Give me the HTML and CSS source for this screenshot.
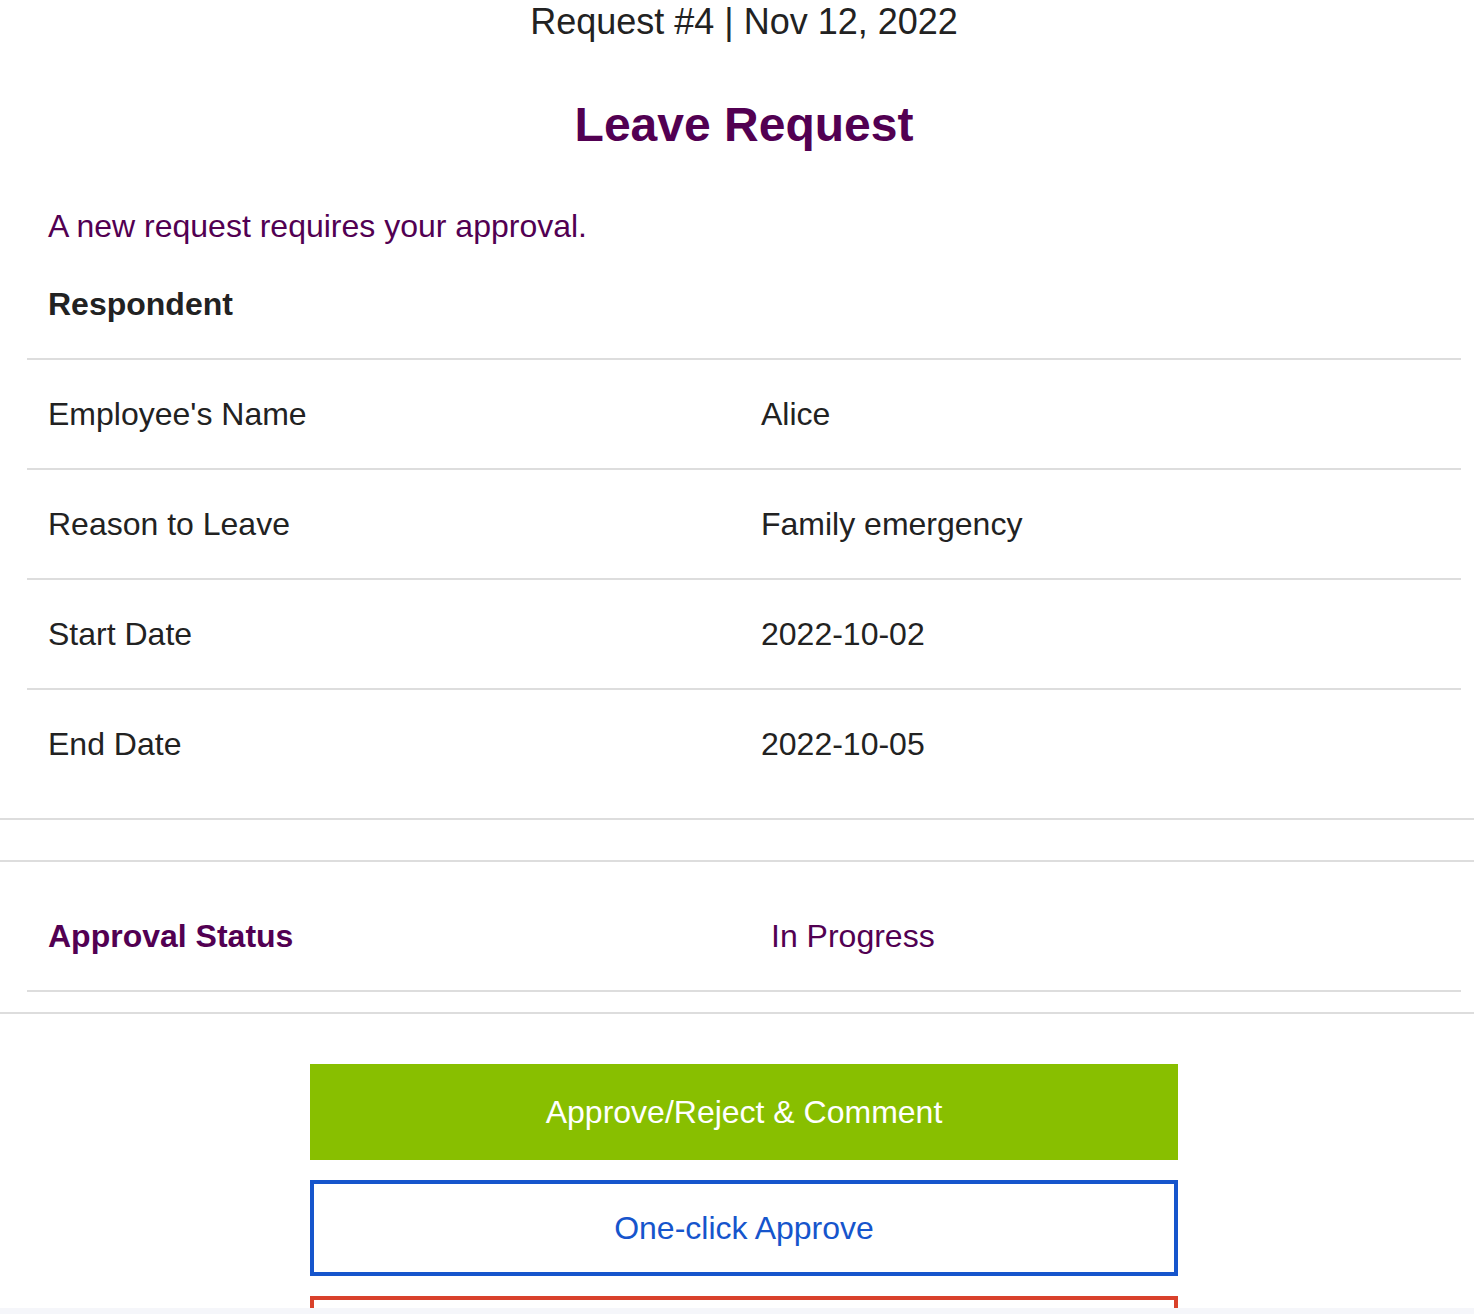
FILE: index.html
```html
<!DOCTYPE html>
<html lang="en">
<head>
<meta charset="utf-8">
<title>Leave Request</title>
<link rel="stylesheet" href="styles.css">
</head>
<body>
<div class="page">
  <div class="meta">Request #4 | Nov 12, 2022</div>
  <h1 class="title">Leave Request</h1>

  <section class="details">
    <div class="inner">
      <p class="intro">A new request requires your approval.</p>
      <p class="group">Respondent</p>
      <div class="table">
        <div class="row"><div class="cell">Employee's Name</div><div class="cell">Alice</div></div>
        <div class="row"><div class="cell">Reason to Leave</div><div class="cell">Family emergency</div></div>
        <div class="row"><div class="cell">Start Date</div><div class="cell">2022-10-02</div></div>
        <div class="row last"><div class="cell">End Date</div><div class="cell">2022-10-05</div></div>
      </div>
    </div>
  </section>

  <section class="spacer"></section>

  <section class="status">
    <div class="inner">
      <div class="status-row">
        <div class="cell status-label">Approval Status</div>
        <div class="cell status-value">In Progress</div>
      </div>
    </div>
  </section>

  <div class="actions">
    <a class="btn btn-primary">Approve/Reject &amp; Comment</a>
    <a class="btn btn-approve">One-click Approve</a>
    <a class="btn btn-reject">One-click Reject</a>
  </div>
</div>
<div class="bottom-strip"></div>
</body>
</html>
```

FILE: styles.css
```css
* { box-sizing: border-box; }

html, body {
  margin: 0;
  padding: 0;
  background: #ffffff;
}

body {
  font-family: "Liberation Sans", Arial, sans-serif;
  color: #222222;
}

.page {
  width: 100%;
}

.meta {
  padding-left: 14px;
  text-align: center;
  font-size: 36px;
  line-height: 44px;
  color: #222222;
}

.title {
  margin: 53px 0 0 0;
  padding-left: 14px;
  text-align: center;
  font-size: 48px;
  line-height: 56px;
  font-weight: bold;
  color: #520052;
}

.details {
  border-bottom: 2px solid #dddddd;
  padding-bottom: 20px;
}

.inner {
  margin: 0 13px 0 27px;
}

.intro {
  margin: 53px 0 0 0;
  padding-left: 21px;
  font-size: 32px;
  line-height: 40px;
  color: #520052;
}

.group {
  margin: 38px 0 0 0;
  padding-left: 21px;
  font-size: 32px;
  line-height: 40px;
  font-weight: bold;
  color: #222222;
}

.table {
  margin-top: 34px;
}

.row {
  display: grid;
  grid-template-columns: 713px 1fr;
  align-items: center;
  height: 110px;
  border-top: 2px solid #dddddd;
}

.cell {
  padding-left: 21px;
  font-size: 32px;
  line-height: 40px;
}

.spacer {
  height: 42px;
  border-bottom: 2px solid #dddddd;
}

.status {
  border-bottom: 2px solid #dddddd;
  padding-bottom: 20px;
}

.status-row {
  display: grid;
  grid-template-columns: 744px 1fr;
  padding: 54px 0 34px 0;
  border-bottom: 2px solid #dddddd;
  color: #520052;
}

.status-label {
  font-weight: bold;
}

.status-value {
  padding-left: 0;
}

.actions {
  display: flex;
  flex-direction: column;
  align-items: center;
  gap: 20px;
  padding: 50px 0 40px 14px;
}

.btn {
  display: flex;
  align-items: center;
  justify-content: center;
  width: 868px;
  height: 96px;
  font-size: 32px;
  text-decoration: none;
}

.btn-primary {
  background: #88bf00;
  color: #ffffff;
}

.btn-approve {
  border: 4px solid #1655cc;
  color: #1655cc;
  background: #ffffff;
}

.btn-reject {
  border: 4px solid #d9412b;
  color: #d9412b;
  background: #ffffff;
}

.bottom-strip {
  position: fixed;
  left: 0;
  right: 0;
  bottom: 0;
  height: 6px;
  background: #f5f6fa;
}
```
